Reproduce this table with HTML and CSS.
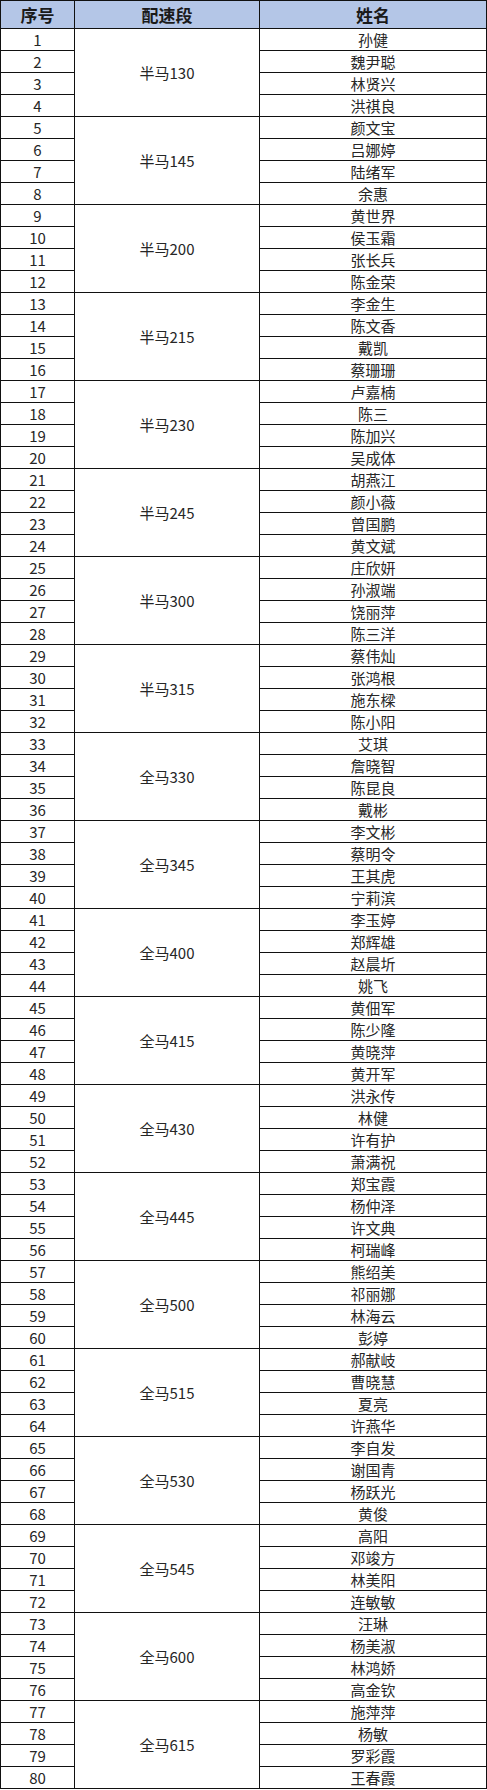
FILE: index.html
```html
<!DOCTYPE html>
<html lang="zh-CN">
<head>
<meta charset="utf-8">
<title>配速段</title>
<link rel="stylesheet" href="styles.css">
</head>
<body>
<table class="pace-table">
<colgroup>
<col class="c-no">
<col class="c-pace">
<col class="c-name">
</colgroup>
<thead>
<tr class="head"><th>序号</th><th>配速段</th><th>姓名</th></tr>
</thead>
<tbody>
<tr><td>1</td><td rowspan="4">半马130</td><td>孙健</td></tr>
<tr><td>2</td><td>魏尹聪</td></tr>
<tr><td>3</td><td>林贤兴</td></tr>
<tr><td>4</td><td>洪祺良</td></tr>
<tr><td>5</td><td rowspan="4">半马145</td><td>颜文宝</td></tr>
<tr><td>6</td><td>吕娜婷</td></tr>
<tr><td>7</td><td>陆绪军</td></tr>
<tr><td>8</td><td>余惠</td></tr>
<tr><td>9</td><td rowspan="4">半马200</td><td>黄世界</td></tr>
<tr><td>10</td><td>侯玉霜</td></tr>
<tr><td>11</td><td>张长兵</td></tr>
<tr><td>12</td><td>陈金荣</td></tr>
<tr><td>13</td><td rowspan="4">半马215</td><td>李金生</td></tr>
<tr><td>14</td><td>陈文香</td></tr>
<tr><td>15</td><td>戴凯</td></tr>
<tr><td>16</td><td>蔡珊珊</td></tr>
<tr><td>17</td><td rowspan="4">半马230</td><td>卢嘉楠</td></tr>
<tr><td>18</td><td>陈三</td></tr>
<tr><td>19</td><td>陈加兴</td></tr>
<tr><td>20</td><td>吴成体</td></tr>
<tr><td>21</td><td rowspan="4">半马245</td><td>胡燕江</td></tr>
<tr><td>22</td><td>颜小薇</td></tr>
<tr><td>23</td><td>曾国鹏</td></tr>
<tr><td>24</td><td>黄文斌</td></tr>
<tr><td>25</td><td rowspan="4">半马300</td><td>庄欣妍</td></tr>
<tr><td>26</td><td>孙淑端</td></tr>
<tr><td>27</td><td>饶丽萍</td></tr>
<tr><td>28</td><td>陈三洋</td></tr>
<tr><td>29</td><td rowspan="4">半马315</td><td>蔡伟灿</td></tr>
<tr><td>30</td><td>张鸿根</td></tr>
<tr><td>31</td><td>施东樑</td></tr>
<tr><td>32</td><td>陈小阳</td></tr>
<tr><td>33</td><td rowspan="4">全马330</td><td>艾琪</td></tr>
<tr><td>34</td><td>詹晓智</td></tr>
<tr><td>35</td><td>陈昆良</td></tr>
<tr><td>36</td><td>戴彬</td></tr>
<tr><td>37</td><td rowspan="4">全马345</td><td>李文彬</td></tr>
<tr><td>38</td><td>蔡明令</td></tr>
<tr><td>39</td><td>王其虎</td></tr>
<tr><td>40</td><td>宁莉滨</td></tr>
<tr><td>41</td><td rowspan="4">全马400</td><td>李玉婷</td></tr>
<tr><td>42</td><td>郑辉雄</td></tr>
<tr><td>43</td><td>赵晨圻</td></tr>
<tr><td>44</td><td>姚飞</td></tr>
<tr><td>45</td><td rowspan="4">全马415</td><td>黄佃军</td></tr>
<tr><td>46</td><td>陈少隆</td></tr>
<tr><td>47</td><td>黄晓萍</td></tr>
<tr><td>48</td><td>黄开军</td></tr>
<tr><td>49</td><td rowspan="4">全马430</td><td>洪永传</td></tr>
<tr><td>50</td><td>林健</td></tr>
<tr><td>51</td><td>许有护</td></tr>
<tr><td>52</td><td>萧满祝</td></tr>
<tr><td>53</td><td rowspan="4">全马445</td><td>郑宝霞</td></tr>
<tr><td>54</td><td>杨仲泽</td></tr>
<tr><td>55</td><td>许文典</td></tr>
<tr><td>56</td><td>柯瑞峰</td></tr>
<tr><td>57</td><td rowspan="4">全马500</td><td>熊绍美</td></tr>
<tr><td>58</td><td>祁丽娜</td></tr>
<tr><td>59</td><td>林海云</td></tr>
<tr><td>60</td><td>彭婷</td></tr>
<tr><td>61</td><td rowspan="4">全马515</td><td>郝献岐</td></tr>
<tr><td>62</td><td>曹晓慧</td></tr>
<tr><td>63</td><td>夏亮</td></tr>
<tr><td>64</td><td>许燕华</td></tr>
<tr><td>65</td><td rowspan="4">全马530</td><td>李自发</td></tr>
<tr><td>66</td><td>谢国青</td></tr>
<tr><td>67</td><td>杨跃光</td></tr>
<tr><td>68</td><td>黄俊</td></tr>
<tr><td>69</td><td rowspan="4">全马545</td><td>高阳</td></tr>
<tr><td>70</td><td>邓竣方</td></tr>
<tr><td>71</td><td>林美阳</td></tr>
<tr><td>72</td><td>连敏敏</td></tr>
<tr><td>73</td><td rowspan="4">全马600</td><td>汪琳</td></tr>
<tr><td>74</td><td>杨美淑</td></tr>
<tr><td>75</td><td>林鸿娇</td></tr>
<tr><td>76</td><td>高金钦</td></tr>
<tr><td>77</td><td rowspan="4">全马615</td><td>施萍萍</td></tr>
<tr><td>78</td><td>杨敏</td></tr>
<tr><td>79</td><td>罗彩霞</td></tr>
<tr><td>80</td><td>王春霞</td></tr>
</tbody>
</table>
</body>
</html>
```

FILE: styles.css
```css
html, body {
  margin: 0;
  padding: 0;
  background: #ffffff;
}

body {
  font-family: "Noto Sans CJK SC", "Noto Sans", sans-serif;
  color: #262626;
}

.pace-table {
  border-collapse: collapse;
  table-layout: fixed;
  width: 486px;
}

.c-no { width: 74px; }
.c-pace { width: 185px; }
.c-name { width: 227px; }

.pace-table th,
.pace-table td {
  border: 1px solid #111111;
  padding: 0;
  text-align: center;
  vertical-align: middle;
  line-height: 20px;
}

.pace-table tbody tr {
  height: 22px;
}

.pace-table td {
  font-size: 15px;
}

.head {
  height: 28px;
}

.head th {
  background: #b4c6e7;
  font-size: 17px;
  font-weight: 700;
  color: #1a1a1a;
  line-height: 26px;
}
```
